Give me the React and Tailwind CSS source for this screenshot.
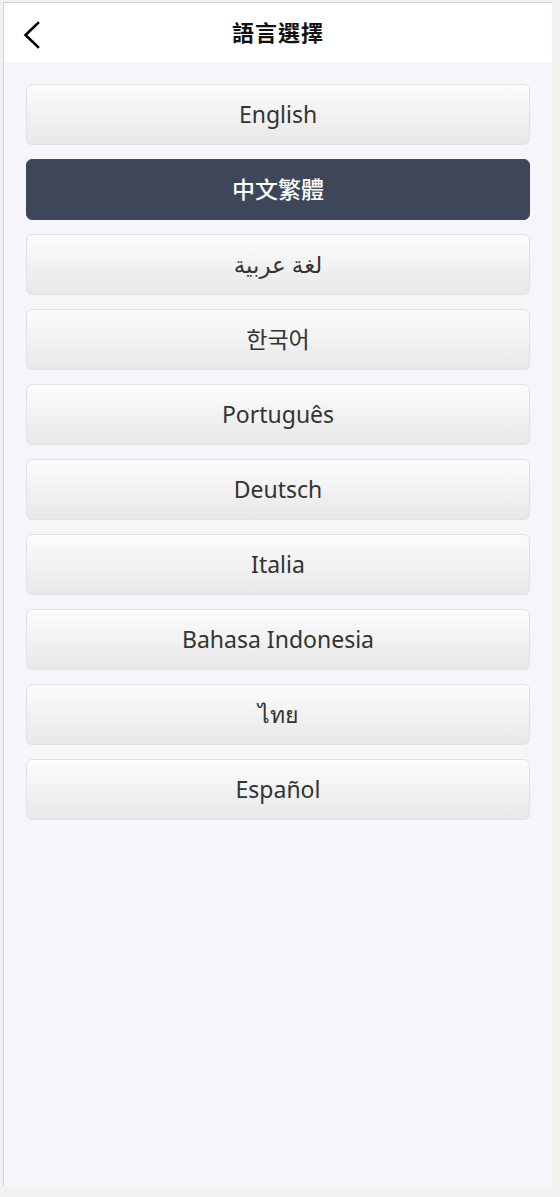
import React, { useState } from 'react';

const languages = [
  'English',
  '中文繁體',
  'لغة عربية',
  '한국어',
  'Português',
  'Deutsch',
  'Italia',
  'Bahasa Indonesia',
  'ไทย',
  'Español',
];

export default function App() {
  const [selected, setSelected] = useState('中文繁體');

  return (
    <div className="min-h-screen bg-[#f1f3f1] pl-[3px] pt-[2px] font-['Noto_Sans','Noto_Sans_CJK_TC','Noto_Sans_CJK_KR','DejaVu_Sans',sans-serif]">
      <div className="w-[549px] h-[1184px] border-l border-t border-[#d4d4d4] bg-[#f6f6fa] flex flex-col">
        {/* HEADER */}
        <header className="relative h-[59px] bg-white flex items-center justify-center shrink-0">
          <button className="absolute left-[14px] top-[13px] p-1" aria-label="Back">
            <svg width="22" height="30" viewBox="0 0 22 30" fill="none">
              <path d="M16 3 L3.5 15 L16 27" stroke="#000" strokeWidth="2.6" strokeLinecap="square" strokeLinejoin="miter" />
            </svg>
          </button>
          <h1 className="text-[22px] font-bold text-[#111] tracking-[1px]">語言選擇</h1>
        </header>

        {/* LANGUAGE LIST */}
        <div className="flex flex-col gap-[14px] px-[22px] pt-[22px]">
          {languages.map((lang) => {
            const active = lang === selected;
            return (
              <button
                key={lang}
                onClick={() => setSelected(lang)}
                className={
                  active
                    ? 'h-[61px] w-full rounded-[6px] bg-[#3d4759] border border-[#3d4759] text-white text-[23px] font-medium flex items-center justify-center'
                    : 'h-[61px] w-full rounded-[6px] bg-gradient-to-b from-[#fcfcfc] to-[#e8e8e8] border border-[#e2e2e2] text-[#333] text-[23px] flex items-center justify-center'
                }
              >
                {lang}
              </button>
            );
          })}
        </div>
      </div>
    </div>
  );
}
